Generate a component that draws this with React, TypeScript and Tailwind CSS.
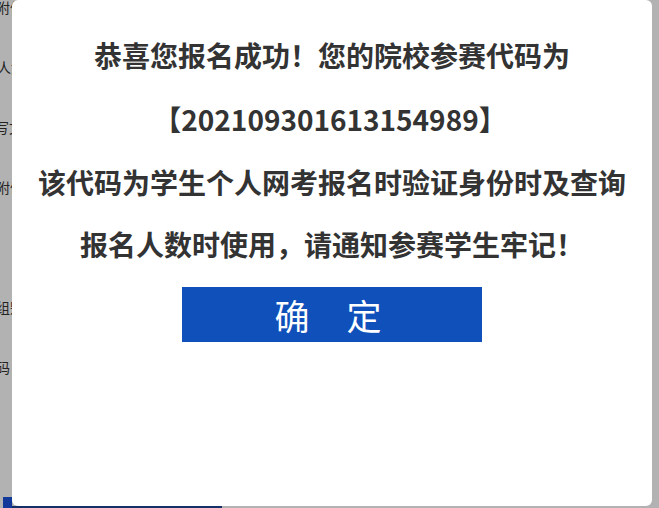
import React from 'react';

const bgLines = [
  { top: 'mt-[0px]', text: '附件', shift: 'ml-[-4px]' },
  { top: 'mt-[46px]', text: '人如', shift: 'ml-[-3px]' },
  { top: 'mt-[46px]', text: '写文', shift: 'ml-[-5px]' },
  { top: 'mt-[46px]', text: '附件', shift: 'ml-[-4px]' },
  { top: 'mt-[106px]', text: '组别', shift: 'ml-[-4px]' },
  { top: 'mt-[46px]', text: '码：', shift: 'ml-[-4px]' },
];

export default function App() {
  return (
    <div
      className="relative w-[659px] h-[508px] overflow-hidden bg-white text-[#333]"
      style={{ fontFamily: '"Noto Sans CJK SC", "Noto Sans", sans-serif' }}
    >
      {/* page behind the dialog */}
      <div className="flex flex-col h-full">
        {bgLines.map((l, i) => (
          <div key={i} className={`${l.top} ${l.shift} h-[14px] text-[14px] leading-[14px] whitespace-nowrap`}>
            {l.text}
          </div>
        ))}
        <div className="mt-auto flex items-end">
          <div className="ml-[3px] w-[9px] h-[11px] bg-[#1a52dc]" />
          <div className="w-[210px] h-[2px] bg-[#1c4596]" />
        </div>
      </div>

      {/* mask */}
      <div className="absolute inset-0 bg-black/30" />

      {/* dialog */}
      <div className="absolute left-[12px] top-0 w-[640px] h-[506px] bg-white rounded-[6px] flex flex-col items-center pt-[23px]">
        <div className="text-[28px] font-bold leading-[64px] whitespace-nowrap">恭喜您报名成功！您的院校参赛代码为</div>
        <div className="text-[28px] font-bold leading-[64px] whitespace-nowrap pr-[4px]">【202109301613154989】</div>
        <div className="text-[28px] font-bold leading-[62px] whitespace-nowrap">该代码为学生个人网考报名时验证身份时及查询</div>
        <div className="text-[28px] font-bold leading-[62px] whitespace-nowrap">报名人数时使用，请通知参赛学生牢记！</div>
        <button className="mt-[12px] w-[300px] h-[55px] bg-[#0f50bb] text-white text-[35px] leading-none flex items-center justify-center gap-[37px] pr-[8px]">
          <span>确</span>
          <span>定</span>
        </button>
      </div>
    </div>
  );
}
